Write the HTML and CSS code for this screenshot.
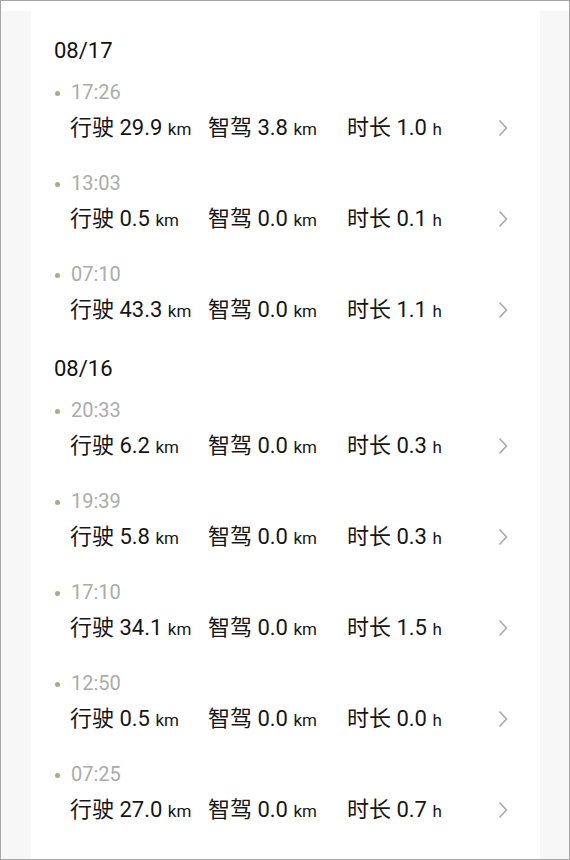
FILE: index.html
```html
<!DOCTYPE html>
<html lang="zh-CN">
<head>
    <title>行程记录</title>
    <meta charset="utf-8">
    <link rel="stylesheet" href="styles.css">
</head>
<body>
<div class="frame">
    <div class="page">
        <div class="card">

            <!-- 08/17 -->
            <div class="day">
                <div class="day-title">08/17</div>
                <div class="trip">
                    <div class="trip-time"><span class="dot"></span>17:26</div>
                    <div class="stats">
                        <span>行驶 29.9 <small>km</small></span>
                        <span>智驾 3.8 <small>km</small></span>
                        <span>时长 1.0 <small>h</small></span>
                        <svg class="arrow" width="10" height="18" viewBox="0 0 10 18"><path d="M1.5 1.5 L8.5 9 L1.5 16.5" fill="none" stroke="#a8a8a8" stroke-width="1.6"/></svg>
                    </div>
                </div>
                <div class="trip">
                    <div class="trip-time"><span class="dot"></span>13:03</div>
                    <div class="stats">
                        <span>行驶 0.5 <small>km</small></span>
                        <span>智驾 0.0 <small>km</small></span>
                        <span>时长 0.1 <small>h</small></span>
                        <svg class="arrow" width="10" height="18" viewBox="0 0 10 18"><path d="M1.5 1.5 L8.5 9 L1.5 16.5" fill="none" stroke="#a8a8a8" stroke-width="1.6"/></svg>
                    </div>
                </div>
                <div class="trip">
                    <div class="trip-time"><span class="dot"></span>07:10</div>
                    <div class="stats">
                        <span>行驶 43.3 <small>km</small></span>
                        <span>智驾 0.0 <small>km</small></span>
                        <span>时长 1.1 <small>h</small></span>
                        <svg class="arrow" width="10" height="18" viewBox="0 0 10 18"><path d="M1.5 1.5 L8.5 9 L1.5 16.5" fill="none" stroke="#a8a8a8" stroke-width="1.6"/></svg>
                    </div>
                </div>
            </div>

            <!-- 08/16 -->
            <div class="day">
                <div class="day-title">08/16</div>
                <div class="trip">
                    <div class="trip-time"><span class="dot"></span>20:33</div>
                    <div class="stats">
                        <span>行驶 6.2 <small>km</small></span>
                        <span>智驾 0.0 <small>km</small></span>
                        <span>时长 0.3 <small>h</small></span>
                        <svg class="arrow" width="10" height="18" viewBox="0 0 10 18"><path d="M1.5 1.5 L8.5 9 L1.5 16.5" fill="none" stroke="#a8a8a8" stroke-width="1.6"/></svg>
                    </div>
                </div>
                <div class="trip">
                    <div class="trip-time"><span class="dot"></span>19:39</div>
                    <div class="stats">
                        <span>行驶 5.8 <small>km</small></span>
                        <span>智驾 0.0 <small>km</small></span>
                        <span>时长 0.3 <small>h</small></span>
                        <svg class="arrow" width="10" height="18" viewBox="0 0 10 18"><path d="M1.5 1.5 L8.5 9 L1.5 16.5" fill="none" stroke="#a8a8a8" stroke-width="1.6"/></svg>
                    </div>
                </div>
                <div class="trip">
                    <div class="trip-time"><span class="dot"></span>17:10</div>
                    <div class="stats">
                        <span>行驶 34.1 <small>km</small></span>
                        <span>智驾 0.0 <small>km</small></span>
                        <span>时长 1.5 <small>h</small></span>
                        <svg class="arrow" width="10" height="18" viewBox="0 0 10 18"><path d="M1.5 1.5 L8.5 9 L1.5 16.5" fill="none" stroke="#a8a8a8" stroke-width="1.6"/></svg>
                    </div>
                </div>
                <div class="trip">
                    <div class="trip-time"><span class="dot"></span>12:50</div>
                    <div class="stats">
                        <span>行驶 0.5 <small>km</small></span>
                        <span>智驾 0.0 <small>km</small></span>
                        <span>时长 0.0 <small>h</small></span>
                        <svg class="arrow" width="10" height="18" viewBox="0 0 10 18"><path d="M1.5 1.5 L8.5 9 L1.5 16.5" fill="none" stroke="#a8a8a8" stroke-width="1.6"/></svg>
                    </div>
                </div>
                <div class="trip">
                    <div class="trip-time"><span class="dot"></span>07:25</div>
                    <div class="stats">
                        <span>行驶 27.0 <small>km</small></span>
                        <span>智驾 0.0 <small>km</small></span>
                        <span>时长 0.7 <small>h</small></span>
                        <svg class="arrow" width="10" height="18" viewBox="0 0 10 18"><path d="M1.5 1.5 L8.5 9 L1.5 16.5" fill="none" stroke="#a8a8a8" stroke-width="1.6"/></svg>
                    </div>
                </div>
            </div>

            <!-- 08/15, cut off at the bottom -->
            <div class="day">
                <div class="day-title">08/15</div>
            </div>

        </div>
    </div>
</div>
</body>
</html>
```

FILE: styles.css
```css
/* ramme rundt hele skjermbildet */
body {
    margin: 0;
    background: #fff;
    font-family: Roboto, "Noto Sans CJK SC", sans-serif;
    color: #161616;
}

.frame {
    box-sizing: border-box;
    width: 570px;
    height: 860px;
    border: 1px solid #a6a6a6;
    overflow: hidden;
    background: #fff;
}

/* grå bakgrunn på sidene */
.page {
    margin-top: 10px;
    padding: 0 29px 0 30px;
    background: #f7f7f7;
    min-height: 860px;
}

/* hvitt kort med listen */
.card {
    background: #fff;
    padding: 25px 32px 0 23px;
    min-height: 860px;
}

.day + .day {
    margin-top: 3px;
}

.day-title {
    font-size: 22px;
    line-height: 30px;
    color: #111;
    margin-bottom: 12px;
}

.trip {
    padding-bottom: 26px;
}

.trip-time {
    display: flex;
    align-items: center;
    gap: 11px;
    height: 28px;
    font-size: 20px;
    line-height: 28px;
    color: #ababab;
    margin-bottom: 7px;
}

.dot {
    width: 5px;
    height: 5px;
    border-radius: 50%;
    background: #9fb183;
    margin-left: 1px;
    margin-top: 2px;
}

.stats {
    display: grid;
    grid-template-columns: 138px 139px 1fr auto;
    align-items: center;
    height: 30px;
    margin-left: 16px;
    font-size: 22px;
    line-height: 30px;
    color: #161616;
}

.stats small {
    font-size: 17px;
    line-height: 0;
}

.arrow {
    display: block;
}
```
